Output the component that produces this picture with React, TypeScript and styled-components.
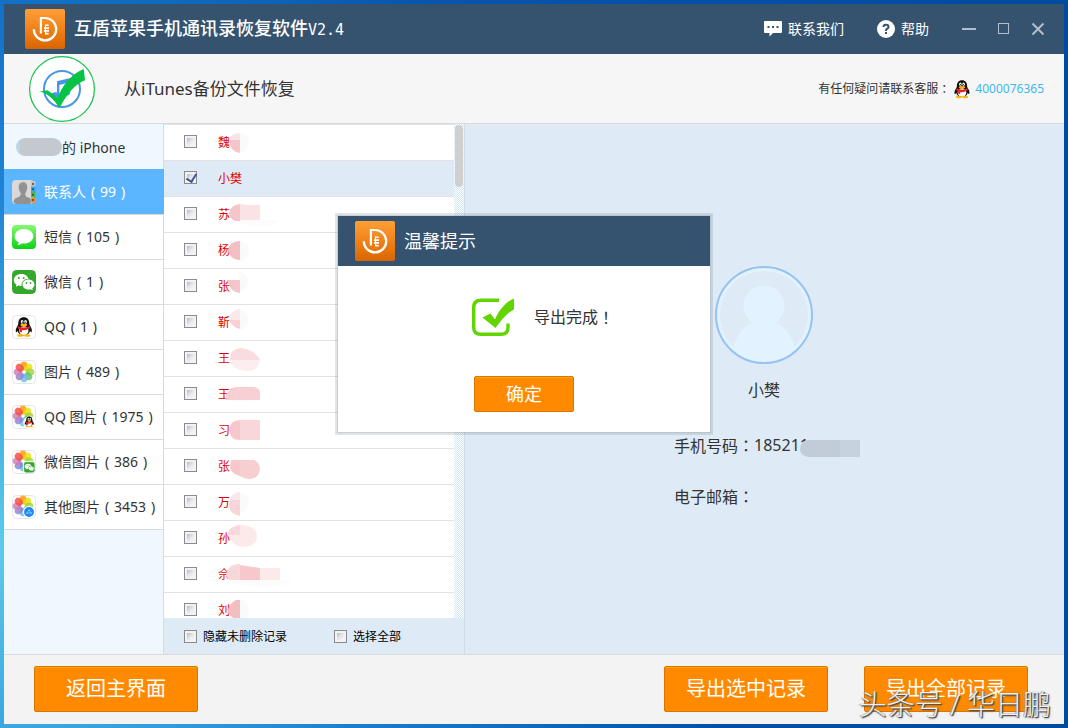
import React from 'react';
import styled, { createGlobalStyle, css } from 'styled-components';

const GlobalStyle = createGlobalStyle`
  * { box-sizing: border-box; }
  body {
    margin: 0;
    font-family: "Noto Sans", "Noto Sans CJK SC", sans-serif;
    font-size: 14px;
    color: #333;
  }
  button, input { font-family: inherit; margin: 0; }
  ul, h1, h2, p, dl, dd { margin: 0; padding: 0; list-style: none; font-weight: 400; }
`;

const Desktop = styled.div`
  position: relative;
  display: flex;
  height: 100vh;
  min-height: 600px;
  padding: 4px;
  background:
    radial-gradient(ellipse 70% 90% at 0 75%, #5acbec, rgba(40, 150, 225, 0.6) 55%, rgba(0, 90, 180, 0)),
    linear-gradient(90deg, #0d66bf, #0556ac 40%, #004a9f);
`;

const Window = styled.main`
  flex: 1;
  min-width: 0;
  display: flex;
  flex-direction: column;
  background: #f3f3f3;
`;

const TitleBar = styled.header`
  flex: none;
  display: flex;
  align-items: center;
  height: 50px;
  padding: 0 19px 0 21px;
  background: #35536f;
  color: #fff;
`;

const AppTitle = styled.h1`
  flex: 1;
  margin-left: 9px;
  font-size: 18px;
  line-height: 24px;
  font-weight: 500;
  white-space: nowrap;
`;

const Version = styled.span`
  font-family: "DejaVu Sans Mono", monospace;
  font-size: 15px;
`;

const BarButton = styled.button`
  display: flex;
  align-items: center;
  gap: 6px;
  margin-right: 33px;
  padding: 0;
  border: 0;
  background: none;
  color: #fff;
  font-size: 14px;
  line-height: 20px;
  white-space: nowrap;
`;

const WindowControls = styled.div`
  display: flex;
  gap: 20px;
`;

const ControlButton = styled.button`
  display: flex;
  padding: 0;
  border: 0;
  background: none;
  color: #b2becb;
`;

const PageHead = styled.section`
  flex: none;
  display: flex;
  align-items: center;
  height: 70px;
  padding: 0 20px 0 25px;
  background: #f6f6f6;
  border-bottom: 1px solid #dadada;
`;

const PageTitle = styled.h2`
  flex: 1;
  margin-left: 29px;
  font-size: 17px;
  line-height: 24px;
`;

const Support = styled.p`
  display: flex;
  align-items: center;
  font-size: 12px;
  line-height: 18px;
  white-space: nowrap;
  svg { margin: 0 5px 0 4px; }
  a { color: #3fb6ee; text-decoration: none; }
`;

/* Full-width punctuation set in the middle of its cell */
const Mark = styled.span`
  font-family: "Noto Sans CJK TC", sans-serif;
`;

const Paren = styled.span`
  width: 14px;
  text-align: center;
`;

const Content = styled.div`
  flex: 1;
  min-height: 0;
  display: flex;
`;

const Sidebar = styled.nav`
  flex: none;
  width: 160px;
  background: #eff7ff;
  border-right: 1px solid #dadada;
`;

const Device = styled.div`
  display: flex;
  align-items: center;
  height: 45px;
  padding-left: 12px;
`;

const DeviceBlur = styled.span`
  width: 46px;
  height: 18px;
  border-radius: 9px;
  background: linear-gradient(90deg, #bcd6ea 3px, #c3c9cf 4px);
`;

const CategoryList = styled.ul`
  margin-right: -1px;
  border-bottom: 1px solid #dadada;
`;

const CategoryItem = styled.li<{ $active?: boolean }>`
  height: 45px;
  border-top: 1px solid #dadada;
  border-right: 1px solid #dadada;
  background: #fff;
  ${p => p.$active && css`
    background: #5cb6ff;
    border-color: #5cb6ff;
    color: #fff;
  `}
`;

const CategoryLink = styled.a`
  display: flex;
  align-items: center;
  height: 100%;
  padding-left: 8px;
  color: inherit;
  text-decoration: none;
  white-space: nowrap;
  line-height: 20px;
  svg { margin-right: 8px; }
`;

const Records = styled.section`
  flex: none;
  display: flex;
  flex-direction: column;
  width: 301px;
  border-right: 1px solid #d2dce5;
`;

const RecordScroll = styled.div`
  flex: 1;
  min-height: 0;
  display: flex;
`;

const RecordList = styled.ul`
  flex: 1;
  overflow: hidden;
  background: #fff;
`;

const RecordRow = styled.li<{ $selected: boolean }>`
  height: 36px;
  border-top: 1px solid #e2e2e2;
  background: ${p => (p.$selected ? '#deebf7' : '#fff')};
`;

const RecordLabel = styled.label`
  display: flex;
  align-items: center;
  gap: 21px;
  height: 100%;
  padding-left: 20px;
  input { margin-bottom: 2px; }
`;

const RecordName = styled.span`
  position: relative;
  color: #e00000;
  font-size: 12px;
  line-height: 35px;
`;

const Smudge = styled.svg`
  position: absolute;
  left: 0;
  top: -1px;
`;

const Check = styled.input`
  appearance: none;
  flex: none;
  position: relative;
  width: 13px;
  height: 13px;
  padding: 2px;
  border: 1px solid #8a8c8e;
  background:
    linear-gradient(135deg, #b3bac6, #e4e6ea 50%, #f8f8f8) content-box,
    #f2f2f2;
  &:checked::after {
    content: '';
    position: absolute;
    left: 3px;
    top: 0;
    width: 5px;
    height: 8px;
    border: solid #3d52a0;
    border-width: 0 2px 2px 0;
    transform: rotate(32deg);
  }
`;

const ScrollTrack = styled.div`
  width: 10px;
  padding: 1px;
  background: repeating-conic-gradient(#d3e7f5 0 25%, #fff 0 50%) 0 0 / 2px 2px;
`;

const ScrollThumb = styled.div`
  height: 62px;
  border-radius: 4px;
  background: #d0d0d0;
`;

const RecordTools = styled.div`
  flex: none;
  display: flex;
  gap: 47px;
  height: 36px;
  padding-left: 20px;
  background: #deebf7;
`;

const ToolLabel = styled.label`
  display: flex;
  align-items: center;
  gap: 6px;
  font-size: 12px;
  color: #000;
`;

const Detail = styled.section`
  flex: 1;
  min-width: 0;
  display: flex;
  flex-direction: column;
  align-items: center;
  padding: 142px 1px 0 0;
  background: #deebf7;
`;

const PersonName = styled.h2`
  margin-top: 14px;
  font-size: 16px;
  line-height: 24px;
`;

const Fields = styled.dl`
  width: 180px;
  margin-top: 31px;
  font-size: 16px;
  line-height: 24px;
`;

const Field = styled.div`
  display: flex;
  margin-bottom: 26px;
  white-space: nowrap;
`;

const Phone = styled.dd`
  position: relative;
`;

const PhoneBlur = styled.span`
  position: absolute;
  left: 46px;
  top: 7px;
  width: 60px;
  height: 17px;
  border-radius: 9px 0 0 9px;
  background: linear-gradient(90deg, #c2ccd8 40px, #c7d2df 40px);
`;

const Footer = styled.footer`
  flex: none;
  display: flex;
  align-items: flex-start;
  gap: 36px;
  height: 70px;
  padding: 11px 36px 0 30px;
  border-top: 1px solid #dadada;
  background: #f3f3f3;
`;

const Spacer = styled.div`
  flex: 1;
`;

const OrangeButton = styled.button<{ $small?: boolean }>`
  width: ${p => (p.$small ? 100 : 164)}px;
  height: ${p => (p.$small ? 36 : 46)}px;
  padding: 0;
  border: 1px solid #d97500;
  border-radius: 2px;
  background: #ff8a00;
  box-shadow: inset 0 1px #ffa800;
  color: #fff;
  font-size: ${p => (p.$small ? 18 : 20)}px;
  line-height: 28px;
  white-space: nowrap;
`;

const Dialog = styled.div`
  position: absolute;
  left: calc(50% - 196px);
  top: 216px;
  width: 372px;
  background: #fff;
  box-shadow: 0 0 0 1px rgba(150, 160, 170, 0.3), 0 0 0 3px rgba(120, 130, 140, 0.22);
`;

const DialogHead = styled.div`
  display: flex;
  align-items: center;
  gap: 9px;
  height: 50px;
  padding-left: 17px;
  background: #35536f;
  color: #fff;
  h2 { font-size: 18px; line-height: 24px; }
`;

const DialogBody = styled.div`
  display: flex;
  flex-direction: column;
  align-items: center;
  gap: 39px;
  padding: 31px 0 20px;
`;

const Message = styled.p`
  align-self: flex-start;
  display: flex;
  align-items: center;
  padding-left: 132px;
  font-size: 16px;
  line-height: 24px;
  svg { margin-right: 20px; }
`;

const Watermark = styled.p`
  position: absolute;
  right: 17px;
  bottom: 6px;
  color: #f4eee6;
  font-size: 28px;
  line-height: 36px;
  font-weight: 300;
  white-space: pre;
  text-shadow: 1px 1px 0 #555, 1px 1px 2px #333, -1px 0 1px #999;
  pointer-events: none;
`;

/* ---- drawings ---- */

const Logo = ({ id }: { id: string }) => (
  <svg width="40" height="40" viewBox="0 0 40 40" aria-hidden="true">
    <defs>
      <linearGradient id={id} x1="0" y1="0" x2="0" y2="1">
        <stop offset="0" stopColor="#ff9f38" />
        <stop offset="0.5" stopColor="#f08219" />
        <stop offset="1" stopColor="#d96500" />
      </linearGradient>
    </defs>
    <rect width="40" height="40" rx="2" fill={`url(#${id})`} />
    <path d="M8.800 20.200A11.200 11.200 0 1 0 20 9H15.900V24.500" fill="none" stroke="#fff" strokeWidth="2.200" />
    <path d="M20 16.300h3.600M19 19.100h5M19 21.900h5M20 24.600h3.600" stroke="#fff" strokeWidth="1.600" />
    <path d="M20.500 15.600v9.700" stroke="#fff" strokeWidth="1" />
  </svg>
);

const ITunesBadge = () => (
  <svg width="66" height="66" viewBox="0 0 66 66" aria-hidden="true">
    <circle cx="33" cy="33" r="32.400" fill="#fff" stroke="#13c14c" strokeWidth="1.200" />
    <circle cx="33" cy="33" r="18" fill="none" stroke="#4796e8" strokeWidth="2" />
    <path d="M28 25.300L41.200 22V36.500a4 3.200 0 1 1-2.200-2.800V26.800L30.400 29v10.500a4.200 3.400 0 1 1-2.400-3z" fill="#4796e8" />
    <path d="M10.600 35.600L18.400 34.200Q24 37.500 28.600 42.600C32 31 42 18 54.800 13L56 24.200C46 28 38 38 30.200 52.200C25 43 18 37 10.600 35.600z" fill="#06c343" />
  </svg>
);

const PenguinShape = () => (
  <>
    <path d="M12 1C7.600 1 5.600 4.200 5.600 8.200C5.600 9.600 5 10.400 4.100 12C2.700 14.300 2.100 16.600 3 18.200C3.700 18.700 4.400 17.400 4.800 16.700C5.300 20 8 22 12 22S18.700 20 19.200 16.700C19.600 17.400 20.300 18.700 21 18.200C21.900 16.600 21.300 14.300 19.900 12C19 10.400 18.400 9.600 18.400 8.200C18.400 4.200 16.400 1 12 1z" fill="#111" />
    <ellipse cx="12" cy="16.500" rx="5.400" ry="5.300" fill="#fff" />
    <ellipse cx="10" cy="6.200" rx="1.600" ry="2.200" fill="#fff" />
    <ellipse cx="14" cy="6.200" rx="1.600" ry="2.200" fill="#fff" />
    <circle cx="10.400" cy="6.600" r="0.800" fill="#111" />
    <circle cx="13.600" cy="6.600" r="0.800" fill="#111" />
    <ellipse cx="12" cy="9.800" rx="4" ry="1.500" fill="#ffb400" />
    <path d="M5.300 11.200Q12 14.600 18.700 11.200L19.400 13.600Q13 17 9.800 15.600V18.400L7.200 18V14.700L4.700 13.500z" fill="#e8201c" />
    <ellipse cx="8" cy="22" rx="3.700" ry="1.500" fill="#ffb400" />
    <ellipse cx="16" cy="22" rx="3.700" ry="1.500" fill="#ffb400" />
  </>
);

const Tile = ({ fill = '#fff' }: { fill?: string }) => (
  <rect x="0.500" y="0.500" width="23" height="23" rx="4" fill={fill} stroke={fill === '#fff' ? '#e6e6e6' : fill} />
);

const petals = ['#ff9500', '#e9e000', '#a0d23c', '#5fbf6a', '#6db9ee', '#8d7fc8', '#d078b8', '#f5493d'];

const Flower = () => (
  <>
    {petals.map((color, i) => (
      <ellipse key={color} cx="12" cy="6" rx="3.500" ry="4.400" fill={color} opacity="0.800" transform={`rotate(${i * 45} 12 12)`} />
    ))}
    <circle cx="12" cy="12" r="1.500" fill="#fff" opacity="0.700" />
  </>
);

const WeChatShape = () => (
  <>
    <path d="M9.200 4C5 4 1.800 6.700 1.800 10C1.800 11.900 2.800 13.500 4.500 14.600L3.900 16.800L6.400 15.500Q7.900 16 9.600 15.900C9 12 12.200 8.600 16.500 8.700C15.700 6 12.800 4 9.200 4z" fill="#fff" />
    <path d="M16.400 9.600C13 9.600 10.500 11.800 10.500 14.600S13 19.600 16.400 19.600Q17.600 19.600 18.800 19.200L20.800 20.300L20.300 18.400C21.700 17.500 22.400 16.100 22.400 14.600C22.400 11.800 19.800 9.600 16.400 9.600z" fill="#fff" />
    <g fill="#35a82c">
      <circle cx="6.900" cy="8" r="1" />
      <circle cx="11.700" cy="8" r="1" />
      <circle cx="14.500" cy="13" r="0.900" />
      <circle cx="18.500" cy="13" r="0.900" />
    </g>
  </>
);

type IconKind = 'contacts' | 'sms' | 'wechat' | 'qq' | 'photos' | 'qqPhotos' | 'wechatPhotos' | 'otherPhotos';

const iconBodies: Record<IconKind, React.ReactNode> = {
  contacts: (
    <>
      <rect width="22" height="24" rx="4" fill="#d9d9d9" />
      <path d="M11 2.200C7.800 2.200 6.500 4.500 6.800 8C7 10.600 8 12 8.800 13.200C8.800 16.200 7.500 16.800 4.500 17.800C2.500 18.600 1.800 20 1.600 22Q2.500 24 5 24H18.800V19Q18 18 16.500 17.600C14 16.800 13.200 16 13.200 13.200C14.200 12 15 10.600 15.200 8C15.500 4.500 14.200 2.200 11 2.200z" fill="#929292" />
      <rect x="19" y="1" width="4.500" height="6" rx="1" fill="#c4c4c4" />
      <rect x="19" y="6.500" width="4.500" height="5.500" fill="#36a8e0" />
      <rect x="19" y="12" width="4.500" height="5.500" fill="#47bd4c" />
      <rect x="19" y="17.500" width="4.500" height="5.500" rx="1" fill="#f09030" />
      <g fill="#444"><circle cx="21" cy="4" r="1" /><circle cx="21" cy="9.300" r="1" /><circle cx="21" cy="14.700" r="1" /><circle cx="21" cy="20" r="1" /></g>
    </>
  ),
  sms: (
    <>
      <defs>
        <linearGradient id="smsFill" x1="0" y1="0" x2="0" y2="1">
          <stop offset="0" stopColor="#86f870" />
          <stop offset="1" stopColor="#0bd318" />
        </linearGradient>
      </defs>
      <rect width="24" height="24" rx="4" fill="url(#smsFill)" />
      <path d="M12 4C6.700 4 2.700 7.200 2.700 11.300C2.700 14 4.300 16.200 6.700 17.500C6.600 18.600 6 19.300 5.200 20C7 20 8.600 19.400 9.500 18.400Q10.700 18.600 12 18.600C17.300 18.600 21.300 15.400 21.300 11.300S17.300 4 12 4z" fill="#fff" />
    </>
  ),
  wechat: <><Tile fill="#35a82c" /><WeChatShape /></>,
  qq: <><Tile /><g transform="translate(1.500 1.500) scale(0.860)"><PenguinShape /></g></>,
  photos: <><Tile /><Flower /></>,
  qqPhotos: (
    <>
      <Tile /><g transform="translate(-1 -1)"><Flower /></g>
      <circle cx="17.500" cy="17.500" r="6.300" fill="#fff" />
      <g transform="translate(11.500 11) scale(0.480)"><PenguinShape /></g>
    </>
  ),
  wechatPhotos: (
    <>
      <Tile /><g transform="translate(-1 -1)"><Flower /></g>
      <rect x="11" y="11" width="12" height="12" rx="2" fill="#fff" />
      <g transform="translate(12 12) scale(0.440)"><Tile fill="#35a82c" /><WeChatShape /></g>
    </>
  ),
  otherPhotos: (
    <>
      <Tile /><g transform="translate(-1 -1)"><Flower /></g>
      <circle cx="17" cy="17" r="6" fill="#fff" />
      <circle cx="17" cy="17" r="4.900" fill="#1c86f2" />
      <path d="M14.500 19.300L17 14.600L19.500 19.300M14 18h6" fill="none" stroke="#8fcdff" strokeWidth="0.800" />
    </>
  ),
};

const CategoryIcon = ({ kind }: { kind: IconKind }) => (
  <svg width="24" height="24" viewBox="0 0 24 24" aria-hidden="true">{iconBodies[kind]}</svg>
);

const Avatar = () => (
  <svg width="98" height="98" viewBox="0 0 98 98" aria-hidden="true">
    <defs>
      <clipPath id="avatarClip"><circle cx="49" cy="49" r="46" /></clipPath>
    </defs>
    <circle cx="49" cy="49" r="48" fill="#e2f2ff" stroke="#96c3f0" strokeWidth="2" />
    <circle cx="49" cy="49" r="44" fill="#deebf7" />
    <g clipPath="url(#avatarClip)" fill="#e2f2ff">
      <circle cx="49" cy="40" r="20.500" />
      <path d="M40 56H58Q75 62 80 82Q68 98 49 98Q30 98 18 82Q23 62 40 56z" />
    </g>
  </svg>
);

const DoneIcon = () => (
  <svg width="44" height="40" viewBox="0 0 44 40" aria-hidden="true">
    <path d="M29 3.200H11Q3.700 3.200 3.700 10.500V30.500Q3.700 37.300 11 37.300H31Q38 37.300 38 30.500V26.500" fill="none" stroke="#62d400" strokeWidth="3.400" />
    <path d="M12.500 20.500L20.500 16.500L25 22.500C29 13 36 4.500 44 1.500V12.500C37 16 31 23 25.500 31z" fill="#62d400" />
  </svg>
);

/* ---- data ---- */

const categories: { kind: IconKind; label: string; count: number }[] = [
  { kind: 'contacts', label: '联系人', count: 99 },
  { kind: 'sms', label: '短信', count: 105 },
  { kind: 'wechat', label: '微信', count: 1 },
  { kind: 'qq', label: 'QQ', count: 1 },
  { kind: 'photos', label: '图片', count: 489 },
  { kind: 'qqPhotos', label: 'QQ 图片', count: 1975 },
  { kind: 'wechatPhotos', label: '微信图片', count: 386 },
  { kind: 'otherPhotos', label: '其他图片', count: 3453 },
];

type Patch = [color: string, d: string];

const halo = (x: number, y: number): Patch => ['#fbfafb', `M${x} ${y}a9 10 0 0 1 0 20z`];

const records: { name: string; patches?: Patch[] }[] = [
  { name: '魏', patches: [halo(22, 9), ['#f8e4e4', 'M22 9Q13 9 11 16H22z'], ['#f5c5c9', 'M11 16H22V29Q12 28 11 16z']] },
  { name: '小樊' },
  { name: '苏', patches: [['#fdfbfb', 'M18 24H62Q58 31 38 30Q24 29 18 24z'], ['#f5c5c9', 'M22 8Q12 9 11 18Q13 24 18 25H22z'], ['#fbe3e5', 'M22 8L30 9H42V24H22z']] },
  { name: '杨', patches: [halo(22, 9), ['#f4bfc2', 'M22 9Q11 9 10 19Q13 28 22 28z']] },
  { name: '张', patches: [halo(21, 4), ['#f4c5c9', 'M9 12H22V25Q13 25 9 12z']] },
  { name: '靳', patches: [halo(22, 6), ['#fbe8ea', 'M22 5Q12 6 11 16H22z'], ['#f9d0d4', 'M11 16H22V25Q15 24 11 16z']] },
  { name: '王', patches: [['#f9dcde', 'M12 20Q12 9 22 8Q36 9 42 20z'], ['#fceeef', 'M12 20H42Q40 30 32 31Q14 31 12 20z']] },
  { name: '王', patches: [['#fefafa', 'M8 18H40V24Q24 27 8 24z'], ['#f8d0d3', 'M7 24Q9 11 19 11H36Q42 12 42 17V24z']] },
  { name: '习', patches: [['#f6c8cb', 'M22 8Q12 8 11 18Q12 28 22 28z'], ['#f9d6da', 'M22 8H42V28H22z']] },
  { name: '张', patches: [['#f6c8cb', 'M13 12H22V28Q13 25 12 20z'], ['#f7cfd1', 'M22 12H36Q42 15 42 21Q41 31 31 31Q26 31 22 28z']] },
  { name: '万', patches: [halo(22, 9), ['#f9e8e9', 'M22 8Q14 8 12 16H22z'], ['#f8d5d8', 'M12 16H22V32Q8 29 12 16z']] },
  { name: '孙', patches: [['#fce9ea', 'M10 15Q15 5 22 5Q39 5 39 17Q38 27 24 27Q15 27 10 15z'], ['#f9d8dc', 'M22 5Q11 6 9 15H22z']] },
  { name: '佘', patches: [['#fdfbfb', 'M10 24H73Q71 31 45 31Q20 30 10 24z'], ['#f9d8d9', 'M22 8Q9 8 8 20L11 24H22z'], ['#f6c8cb', 'M22 9L42 12V24H22z'], ['#fce9ea', 'M42 12H62V24H42z']] },
  { name: '刘', patches: [halo(22, 8), ['#f2bfc1', 'M22 8H18Q9 13 10 21Q15 28 22 27z']] },
];

export default function App() {
  return (
    <>
      <GlobalStyle />
      <Desktop>
        <Window>
          <TitleBar>
            <Logo id="logoMain" />
            <AppTitle>互盾苹果手机通讯录恢复软件<Version>V2.4</Version></AppTitle>
            <BarButton>
              <svg width="18" height="16" viewBox="0 0 18 16" aria-hidden="true">
                <path d="M1 0H17Q18 0 18 1V11Q18 12 17 12H9L5.500 15.500V12H1Q0 12 0 11V1Q0 0 1 0z" fill="#fff" />
                <path d="M3.500 5h2v2h-2zM8 5h2v2H8zM12.500 5h2v2h-2z" fill="#35536f" />
              </svg>
              联系我们
            </BarButton>
            <BarButton>
              <svg width="18" height="18" viewBox="0 0 18 18" aria-hidden="true">
                <circle cx="9" cy="9" r="9" fill="#fff" />
                <path d="M6.500 7Q6.500 4.700 9 4.700T11.500 7Q11.500 8 10.300 8.700Q9 9.500 9 11" fill="none" stroke="#35536f" strokeWidth="2" />
                <rect x="8" y="12" width="2" height="2" fill="#35536f" />
              </svg>
              帮助
            </BarButton>
            <WindowControls>
              <ControlButton aria-label="最小化">
                <svg width="15" height="14"><path d="M0 7h14" stroke="currentColor" strokeWidth="2" /></svg>
              </ControlButton>
              <ControlButton aria-label="最大化">
                <svg width="14" height="14"><rect x="1.500" y="1.500" width="10" height="10" fill="none" stroke="currentColor" /></svg>
              </ControlButton>
              <ControlButton aria-label="关闭">
                <svg width="14" height="14"><path d="M1.500 1.500l11 11M12.500 1.500l-11 11" stroke="currentColor" strokeWidth="2" /></svg>
              </ControlButton>
            </WindowControls>
          </TitleBar>

          <PageHead>
            <ITunesBadge />
            <PageTitle>从iTunes备份文件恢复</PageTitle>
            <Support>
              有任何疑问请联系客服<Mark>：</Mark>
              <svg width="16" height="20" viewBox="2 0 20 24" aria-hidden="true"><PenguinShape /></svg>
              <a href="#support">4000076365</a>
            </Support>
          </PageHead>

          <Content>
            <Sidebar>
              <Device><DeviceBlur />的 iPhone</Device>
              <CategoryList>
                {categories.map((c, i) => (
                  <CategoryItem key={c.kind} $active={i === 0}>
                    <CategoryLink href={`#${c.kind}`}>
                      <CategoryIcon kind={c.kind} />
                      {c.label}<Paren>(</Paren>{c.count}<Paren>)</Paren>
                    </CategoryLink>
                  </CategoryItem>
                ))}
              </CategoryList>
            </Sidebar>

            <Records>
              <RecordScroll>
                <RecordList>
                  {records.map((r, i) => (
                    <RecordRow key={i} $selected={i === 1}>
                      <RecordLabel>
                        <Check type="checkbox" defaultChecked={i === 1} />
                        <RecordName>
                          {r.name}
                          {r.patches && (
                            <Smudge width="80" height="36" viewBox="0 0 80 36" aria-hidden="true">
                              {r.patches.map(([color, d]) => <path key={d} d={d} fill={color} />)}
                            </Smudge>
                          )}
                        </RecordName>
                      </RecordLabel>
                    </RecordRow>
                  ))}
                </RecordList>
                <ScrollTrack><ScrollThumb /></ScrollTrack>
              </RecordScroll>
              <RecordTools>
                <ToolLabel><Check type="checkbox" />隐藏未删除记录</ToolLabel>
                <ToolLabel><Check type="checkbox" />选择全部</ToolLabel>
              </RecordTools>
            </Records>

            <Detail>
              <Avatar />
              <PersonName>小樊</PersonName>
              <Fields>
                <Field>
                  <dt>手机号码<Mark>：</Mark></dt>
                  <Phone>185211<PhoneBlur /></Phone>
                </Field>
                <Field><dt>电子邮箱<Mark>：</Mark></dt></Field>
              </Fields>
            </Detail>
          </Content>

          <Footer>
            <OrangeButton>返回主界面</OrangeButton>
            <Spacer />
            <OrangeButton>导出选中记录</OrangeButton>
            <OrangeButton>导出全部记录</OrangeButton>
          </Footer>
        </Window>

        <Dialog role="dialog" aria-labelledby="dialogTitle">
          <DialogHead>
            <Logo id="logoDialog" />
            <h2 id="dialogTitle">温馨提示</h2>
          </DialogHead>
          <DialogBody>
            <Message><DoneIcon />导出完成<Mark>！</Mark></Message>
            <OrangeButton $small>确定</OrangeButton>
          </DialogBody>
        </Dialog>

        <Watermark>头条号 / 华日鹏</Watermark>
      </Desktop>
    </>
  );
}
